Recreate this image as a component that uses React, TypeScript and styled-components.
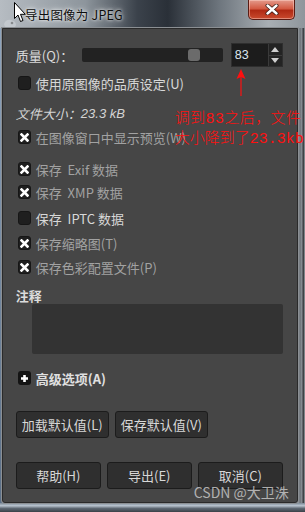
import React from "react";
import styled, { createGlobalStyle } from "styled-components";

const Global = createGlobalStyle`
  html, body { margin: 0; padding: 0; background: #2b2f33; }
  body { font-family: "Noto Sans CJK SC", "Noto Sans", sans-serif; }
  * { box-sizing: border-box; }
`;

const FONT = `"Noto Sans CJK SC", "Noto Sans", sans-serif`;

const Window = styled.div`
  position: relative;
  width: 305px;
  height: 512px;
  display: flex;
  flex-direction: column;
  overflow: hidden;
  background: linear-gradient(90deg, #9aa3ab 0%, #6f7880 30%, #2c333b 50%, #59616a 70%, #a3a9ae 100%);
`;

const TitleBar = styled.div`
  height: 28px;
  display: flex;
  align-items: center;
  position: relative;
  background: linear-gradient(90deg, #b6bcc2 0%, #8d959c 28%, #3b424b 45%, #2a3038 55%, #6e767e 72%, #a9afb4 88%, #8f969c 100%);
`;

const AppIcon = styled.div`
  width: 14px;
  height: 12px;
  margin-left: 3px;
  margin-top: 6px;
  opacity: 0.45;
`;

const Title = styled.span`
  margin-left: 8px;
  margin-top: 1px;
  font-family: ${FONT};
  font-size: 12.5px;
  color: #0d0d0d;
  text-shadow: 0 0 6px rgba(255, 255, 255, 0.9), 0 0 3px rgba(255, 255, 255, 0.9);
  letter-spacing: 0.2px;
`;

const CloseButton = styled.div`
  position: absolute;
  right: 10px;
  top: 0;
  width: 47px;
  height: 20px;
  border: 1px solid #5a1c14;
  border-top: none;
  border-radius: 0 0 5px 5px;
  background: linear-gradient(180deg, #e49a8c 0%, #d35a43 45%, #b02a14 55%, #c94a2e 100%);
  box-shadow: inset 0 0 0 1px rgba(255, 220, 210, 0.45);
  display: flex;
  align-items: center;
  justify-content: center;
`;

const Cursor = styled.svg`
  position: absolute;
  left: 14px;
  top: 2px;
`;

const Middle = styled.div`
  flex: 1;
  display: flex;
`;

const LeftFrame = styled.div`
  width: 2px;
  background: linear-gradient(180deg, #8ea4bd, #5a6e86);
`;

const RightFrame = styled.div`
  width: 8px;
  background: linear-gradient(90deg, #9ca2a8 0%, #6c7278 30%, #8a9096 55%, #2e3236 75%, #a0a5aa 100%);
`;

const BottomFrame = styled.div`
  height: 9px;
  background: linear-gradient(180deg, #7a8896 0%, #b9c4cf 30%, #5e6873 60%, #3a4047 100%);
`;

const Panel = styled.div`
  flex: 1;
  position: relative;
  background: #464646;
  border: 1px solid #2a2a2a;
  box-shadow: 0 0 0 1px #8b8f93;
  border-radius: 0 0 3px 3px;
  padding: 0 14px 0 13px;
  display: flex;
  flex-direction: column;
  font-family: ${FONT};
  font-size: 13px;
  color: #dadada;
`;

const QualityRow = styled.div`
  margin-top: 14px;
  height: 24px;
  display: flex;
  align-items: center;
`;

const Label = styled.span`
  width: 66px;
  white-space: nowrap;
`;

const Track = styled.div`
  width: 141px;
  height: 14px;
  background: #222222;
  border-radius: 2px;
  position: relative;
  display: flex;
  align-items: center;
  padding-left: 106px;
`;

const Thumb = styled.div`
  width: 12px;
  height: 12px;
  border-radius: 3px;
  background: #6b6b6b;
`;

const Spin = styled.div`
  margin-left: 8px;
  width: 52px;
  height: 24px;
  display: flex;
  border: 1px solid #2e2e2e;
  background: #1c1c1c;
`;

const SpinValue = styled.div`
  flex: 1;
  display: flex;
  align-items: center;
  padding-left: 3px;
  font-family: "Liberation Sans", Arial, sans-serif;
  font-size: 12.5px;
  color: #dde6ef;
`;

const SpinButtons = styled.div`
  width: 14px;
  display: flex;
  flex-direction: column;
  border-left: 1px solid #3a3a3a;
`;

const SpinBtn = styled.div`
  flex: 1;
  display: flex;
  align-items: center;
  justify-content: center;
  background: #232323;
  & + & { border-top: 1px solid #3a3a3a; }
`;

const Row = styled.div<{ $mt: number; $dim?: boolean }>`
  margin-top: ${(p) => p.$mt}px;
  height: 20px;
  display: flex;
  align-items: center;
  padding-left: 2px;
  gap: 5px;
  white-space: nowrap;
  color: ${(p) => (p.$dim ? "#a2a2a2" : "#d8d8d8")};
`;

const Box = styled.div`
  width: 13px;
  height: 14px;
  border-radius: 3px;
  background: #1f1f1f;
  border: 1px solid #161616;
  display: flex;
  align-items: center;
  justify-content: center;
  flex-shrink: 0;
`;

const FileSize = styled.div`
  margin-top: 10px;
  height: 20px;
  display: flex;
  align-items: center;
  font-style: italic;
  color: #d4d4d4;
  white-space: nowrap;
`;

const Num = styled.span`
  font-family: "Liberation Sans", Arial, sans-serif;
`;

const CommentLabel = styled.div`
  margin-top: 9px;
  height: 18px;
  display: flex;
  align-items: center;
  font-weight: bold;
  color: #dcdcdc;
`;

const CommentArea = styled.div`
  margin-left: 16px;
  height: 50px;
  background: #333333;
  border-radius: 2px;
`;

const Advanced = styled.div`
  margin-top: 14px;
  height: 20px;
  display: flex;
  align-items: center;
  gap: 5px;
  padding-left: 2px;
  font-weight: bold;
  color: #e0e0e0;
`;

const PlusBox = styled.div`
  width: 13px;
  height: 14px;
  background: #141414;
  border-radius: 3px;
  display: flex;
  align-items: center;
  justify-content: center;
`;

const ButtonRow = styled.div<{ $mt: number }>`
  margin-top: ${(p) => p.$mt}px;
  display: flex;
  gap: 6px;
`;

const Button = styled.div<{ $w: number }>`
  width: ${(p) => p.$w}px;
  height: 27px;
  background: #2f2f2f;
  border: 1px solid #1c1c1c;
  border-radius: 3px;
  display: flex;
  align-items: center;
  justify-content: center;
  color: #d8d8d8;
  font-size: 13px;
  white-space: nowrap;
`;

const Annotation = styled.div`
  position: absolute;
  left: 172px;
  top: 79px;
  font-family: "Noto Sans CJK SC", sans-serif;
  font-weight: 300;
  font-size: 15px;
  line-height: 17px;
  color: #ff1010;
  white-space: nowrap;
`;

const AnnotationLine = styled.div<{ $ls: number }>`
  letter-spacing: ${(p) => p.$ls}px;
`;

const Mono = styled.span`
  font-family: "Liberation Mono", monospace;
  font-weight: normal;
`;

const Arrow = styled.svg`
  position: absolute;
  left: 230px;
  top: 40px;
`;

const Watermark = styled.div`
  position: absolute;
  right: 8px;
  bottom: 0px;
  font-family: "Noto Sans CJK SC", "Liberation Sans", sans-serif;
  font-size: 14px;
  color: rgba(215, 215, 215, 0.75);
  white-space: nowrap;
`;

const Check = () => (
  <svg width="9" height="9" viewBox="0 0 9 9">
    <path d="M1.5 1.5 L7.5 7.5 M7.5 1.5 L1.5 7.5" stroke="#ffffff" strokeWidth="2.6" strokeLinecap="square" />
  </svg>
);

const CheckRow = ({ mt, dim, checked, children }: { mt: number; dim?: boolean; checked?: boolean; children: React.ReactNode }) => (
  <Row $mt={mt} $dim={dim}>
    <Box>{checked && <Check />}</Box>
    <span>{children}</span>
  </Row>
);

export default function App() {
  return (
    <>
      <Global />
      <Window>
        <TitleBar>
          <AppIcon>
            <svg width="14" height="12" viewBox="0 0 14 12">
              <path d="M1 6 Q3 1 8 2 Q13 3 13 7 Q12 11 7 11 Q2 11 1 6 Z" fill="#d8dde2" />
              <circle cx="9" cy="5" r="1.3" fill="#555" />
            </svg>
          </AppIcon>
          <Title>导出图像为 JPEG</Title>
          <CloseButton>
            <svg width="14" height="11" viewBox="0 0 14 11">
              <path d="M2.5 1.5 L11.5 9.5 M11.5 1.5 L2.5 9.5" stroke="#3a1a14" strokeWidth="4" strokeLinecap="round" />
              <path d="M2.5 1.5 L11.5 9.5 M11.5 1.5 L2.5 9.5" stroke="#ffffff" strokeWidth="2.4" strokeLinecap="round" />
            </svg>
          </CloseButton>
          <Cursor width="12" height="21" viewBox="0 0 12 21">
            <path d="M0.5 0.5 L0.5 16.5 L4 13 L6.5 19.5 L9 18.5 L6.5 12.3 L11.3 12.3 Z" fill="#ffffff" stroke="#000000" strokeWidth="1" />
          </Cursor>
        </TitleBar>
        <Middle>
          <LeftFrame />
          <Panel>
            <QualityRow>
              <Label>质量(Q)：</Label>
              <Track>
                <Thumb />
              </Track>
              <Spin>
                <SpinValue>83</SpinValue>
                <SpinButtons>
                  <SpinBtn>
                    <svg width="8" height="5" viewBox="0 0 8 5"><path d="M0 5 L4 0 L8 5 Z" fill="#cfcfcf" /></svg>
                  </SpinBtn>
                  <SpinBtn>
                    <svg width="8" height="5" viewBox="0 0 8 5"><path d="M0 0 L4 5 L8 0 Z" fill="#cfcfcf" /></svg>
                  </SpinBtn>
                </SpinButtons>
              </Spin>
            </QualityRow>
            <CheckRow mt={6}>使用原图像的品质设定(U)</CheckRow>
            <FileSize>
              文件大小：<Num>23.3 kB</Num>
            </FileSize>
            <CheckRow mt={4} dim checked>在图像窗口中显示预览(W)</CheckRow>
            <CheckRow mt={12} dim checked>保存&nbsp; Exif 数据</CheckRow>
            <CheckRow mt={3} dim checked>保存&nbsp; XMP 数据</CheckRow>
            <CheckRow mt={6}>保存&nbsp; IPTC 数据</CheckRow>
            <CheckRow mt={5} dim checked>保存缩略图(T)</CheckRow>
            <CheckRow mt={4} dim checked>保存色彩配置文件(P)</CheckRow>
            <CommentLabel>注释</CommentLabel>
            <CommentArea />
            <Advanced>
              <PlusBox>
                <svg width="9" height="9" viewBox="0 0 9 9">
                  <path d="M4.5 1 V8 M1 4.5 H8" stroke="#ffffff" strokeWidth="2.6" />
                </svg>
              </PlusBox>
              <span>高级选项(A)</span>
            </Advanced>
            <ButtonRow $mt={23}>
              <Button $w={93}>加载默认值(L)</Button>
              <Button $w={93}>保存默认值(V)</Button>
            </ButtonRow>
            <ButtonRow $mt={24}>
              <Button $w={85}>帮助(H)</Button>
              <Button $w={85}>导出(E)</Button>
              <Button $w={85}>取消(C)</Button>
            </ButtonRow>
            <Arrow width="16" height="30" viewBox="0 0 16 30">
              <path d="M8 8 L8 27" stroke="#ff1010" strokeWidth="1.2" />
              <path d="M8 0 L3.5 10 L8 8 L12.5 10 Z" fill="#ff1010" />
            </Arrow>
            <Annotation>
              <AnnotationLine $ls={0.4}>
                调到<Mono>83</Mono>之后，文件
              </AnnotationLine>
              <AnnotationLine $ls={0}>
                大小降到了<Mono>23.3kb</Mono>
              </AnnotationLine>
            </Annotation>
            <Watermark>CSDN @大卫洙</Watermark>
          </Panel>
          <RightFrame />
        </Middle>
        <BottomFrame />
      </Window>
    </>
  );
}
